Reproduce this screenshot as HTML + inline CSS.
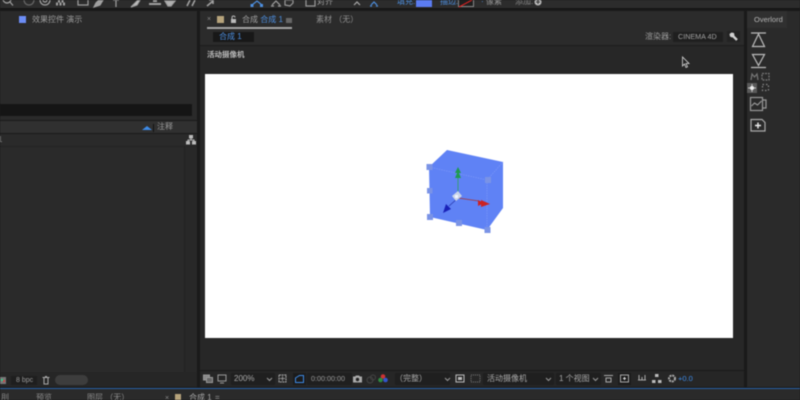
<!DOCTYPE html>
<html><head><meta charset="utf-8">
<style>
html,body{margin:0;padding:0;width:800px;height:400px;overflow:hidden;background:#1a1a1a}
body{font-family:"Liberation Sans","Noto Sans CJK SC",sans-serif;font-size:8px;color:#a8a8a8}
#w{position:absolute;left:0;top:0;width:800px;height:400px;overflow:hidden;filter:blur(.4px)}
.a{position:absolute}
.t{position:absolute;white-space:nowrap;line-height:10px}
svg{position:absolute;overflow:visible}
</style></head><body><div id="w">
<!-- panels -->
<div class="a" style="left:0;top:0;width:800px;height:8px;background:#2c2c2c"></div>
<div class="a" style="left:0;top:11px;width:197px;height:92px;background:#2a2a2a"></div>
<div class="a" style="left:0;top:104px;width:192px;height:12px;background:#151515;border-radius:0 2px 2px 0"></div>
<div class="a" style="left:0;top:103px;width:197px;height:1px;background:#2a2a2a"></div>
<div class="a" style="left:192px;top:104px;width:5px;height:16px;background:#2a2a2a"></div>
<div class="a" style="left:0;top:116px;width:197px;height:4px;background:#2a2a2a"></div>
<div class="a" style="left:0;top:121px;width:197px;height:12px;background:#303030"></div>
<div class="a" style="left:0;top:134px;width:197px;height:238px;background:#2a2a2a"></div>
<div class="a" style="left:185px;top:146px;width:12px;height:226px;background:#282828"></div>
<div class="a" style="left:0;top:146px;width:197px;height:1px;background:#232323"></div>
<div class="a" style="left:184px;top:146px;width:1px;height:226px;background:#222"></div>
<div class="a" style="left:0;top:372px;width:197px;height:15px;background:#262626"></div>
<div class="a" style="left:200px;top:11px;width:544px;height:34px;background:#2b2b2b"></div>
<div class="a" style="left:200px;top:46px;width:544px;height:324px;background:#272727"></div>
<div class="a" style="left:200px;top:371px;width:544px;height:16px;background:#262626"></div>
<div class="a" style="left:747px;top:11px;width:53px;height:376px;background:#2a2a2a"></div>
<div class="a" style="left:747px;top:11px;width:40px;height:17px;background:#303030"></div>
<div class="a" style="left:0;top:388px;width:800px;height:1px;background:#2a62a8"></div>
<div class="a" style="left:0;top:389px;width:800px;height:11px;background:#2a2a2a"></div>
<!-- white comp -->
<div class="a" style="left:205px;top:74px;width:528px;height:264px;background:#fff"></div>
<!-- top toolbar icons -->
<svg style="left:0;top:0" width="560" height="9" fill="none" stroke="#a0a0a0" stroke-width="1.2">
<circle cx="7" cy="-1" r="4"/><path d="M10 2l3 3.500"/>
<circle cx="29" cy="0" r="5" stroke="#666"/><circle cx="45" cy="0" r="5"/><circle cx="45" cy="0" r="2"/>
<path d="M56 4h10M58 1h6" stroke-width="3" stroke-dasharray="2 1.500"/>
<rect x="78" y="-4" width="10" height="9"/>
<path d="M94 7l2-4 4-4 3 1-3 5z" fill="#a0a0a0"/>
<path d="M113 0h6M116 0v7"/>
<path d="M131 7l3-3 4-4h2l-3 5z" fill="#c4c4c4"/>
<path d="M149 4h12" stroke-width="2"/><path d="M153 1h4" stroke-width="2"/>
<path d="M165 1h10l-4 5h-3z" fill="#b0b0b0"/>
<path d="M187 6l3-6M192 6l3-6" stroke-width="1.600"/>
<path d="M207 6l6-5M209 0h4v4" stroke-width="1.600"/>
<path d="M252 5l5-4 5 4" stroke="#4d8fe0"/><rect x="250.500" y="4" width="3" height="3" fill="#4d8fe0" stroke="none"/><rect x="260" y="4" width="3" height="3" fill="#4d8fe0" stroke="none"/>
<path d="M272 5l4-4 4 4M271 6h3M278 6h3"/>
<path d="M285 0h8v3l-3 3-5-1z" stroke="#999"/>
<rect x="306" y="-2" width="9" height="8" stroke="#999"/>
<path d="M354 5l3-3 3 3" stroke="#aaa"/>
<path d="M371 5l3-3 3 3M370 6h2M376 6h2" stroke="#4d8fe0"/>
</svg>
<div class="a" style="left:0;top:8px;width:800px;height:1px;background:#161616"></div>
<div class="t" style="left:317px;top:-3px;color:#a0a0a0">对齐</div>
<div class="t" style="left:397px;top:-3px;color:#4d8fe0">填充:</div>
<div class="a" style="left:416px;top:0;width:16px;height:7px;background:#5b7cf2"></div>
<div class="t" style="left:440px;top:-3px;color:#4d8fe0">描边:</div>
<div class="a" style="left:458px;top:0;width:14px;height:6px;background:#1e1e1e;border:1px solid #888;border-top:0"></div>
<svg style="left:458px;top:0" width="16" height="8"><path d="M1 7L14 0" stroke="#d22" stroke-width="1"/></svg>
<div class="t" style="left:481px;top:-3px;color:#9a9a9a"><span style="color:#4d8fe0">·</span> 像素</div>
<div class="t" style="left:515px;top:-3px;color:#888">添加:</div>
<svg style="left:534px;top:0" width="8" height="7"><circle cx="4" cy="2" r="3.500" fill="#bbb"/><path d="M2 2h4M4 0v4" stroke="#333"/></svg>
<!-- left panel -->
<div class="a" style="left:19px;top:16px;width:7px;height:7px;background:#6c8df5"></div>
<div class="t" style="left:32px;top:15px;color:#9c9c9c">效果控件 演示</div>
<svg style="left:142px;top:125px" width="10" height="5"><path d="M0 5L5 1l5 4z" fill="#3d8ae6"/></svg>
<div class="a" style="left:153px;top:124px;width:1px;height:8px;background:#111"></div>
<div class="t" style="left:157px;top:122px;font-size:8px;color:#989898">注释</div>
<div class="t" style="left:-2px;top:135px;color:#888">1</div>
<svg style="left:186px;top:135px" width="10" height="10" fill="#bbb"><rect x="3" y="0" width="4" height="3.500"/><rect x="0" y="6" width="4" height="3.500"/><rect x="6" y="6" width="4" height="3.500"/><path d="M5 3v2M2 6V5h6v1" stroke="#bbb" fill="none"/></svg>
<!-- bottom of left -->
<svg style="left:0;top:376px" width="8" height="9"><rect x="0" y="1" width="6" height="7" fill="#777"/><rect x="1" y="3" width="2" height="2" fill="#3c8"/><rect x="3" y="4" width="2" height="2" fill="#c44"/></svg>
<div class="a" style="left:11px;top:376px;width:26px;height:9px;background:#1e1e1e"></div>
<div class="t" style="left:16px;top:376px;font-size:7px;color:#999">8 bpc</div>
<svg style="left:42px;top:376px" width="8" height="9" fill="none" stroke="#aaa"><path d="M0.500 1.500h7M2 2v6h4V2M3 0.500h2"/></svg>
<div class="a" style="left:55px;top:375px;width:33px;height:10px;background:#3d3d3d;border-radius:5px"></div>
<!-- comp tabs -->
<div class="t" style="left:207px;top:15px;color:#888;font-size:7px">×</div>
<div class="a" style="left:217px;top:16px;width:7px;height:7px;background:#b7a47c"></div>
<svg style="left:230px;top:16px" width="7" height="7"><rect x="1" y="3" width="5" height="4" fill="#bbb"/><path d="M2 3V1.500a1.500 1.500 0 0 1 3 0" fill="none" stroke="#bbb"/></svg>
<div class="t" style="left:242px;top:15px;color:#a0a0a0">合成 <span style="color:#4d8fe0">合成 1</span></div>
<div class="a" style="left:286px;top:18px;width:6px;height:5px;background:#666"></div>
<div class="a" style="left:207px;top:27px;width:85px;height:2px;background:#a4a4a4"></div>
<div class="t" style="left:316px;top:15px;color:#8e8e8e">素材 （无）</div>
<div class="a" style="left:213px;top:32px;width:41px;height:10px;background:#181818"></div>
<div class="t" style="left:219px;top:32px;color:#4d8fe0">合成 1</div>
<div class="a" style="left:200px;top:45px;width:544px;height:1px;background:#1c1c1c"></div>
<div class="t" style="left:207px;top:50px;font-size:7.500px;font-weight:bold;color:#bcbcbc">活动摄像机</div>
<div class="t" style="left:645px;top:32px;color:#999">渲染器:</div>
<div class="a" style="left:673px;top:32px;width:50px;height:10px;background:#1f1f1f"></div>
<div class="t" style="left:678px;top:32px;font-size:7.200px;color:#a0a0a0">CINEMA 4D</div>
<div class="a" style="left:727px;top:31px;width:13px;height:11px;background:#232323"></div>
<svg style="left:729px;top:32px" width="10" height="10" fill="none"><path d="M3 3l5 5" stroke="#d0d0d0" stroke-width="2.400"/><path d="M5 1L2.500 .5 .5 2 1 4.500 3 5.500 5.500 3.500z" fill="#d0d0d0"/></svg>
<!-- cursor -->
<svg style="left:681px;top:56px" width="9" height="13"><path d="M1.500 1v9l2-2 1.500 3.500 1.500-.7L5 7.500h3z" fill="#222" stroke="#ddd" stroke-width=".8"/></svg>
<!-- overlord -->
<div class="t" style="left:754px;top:15px;font-size:7.500px;color:#b4b4b4">Overlord</div>
<svg style="left:748px;top:30px" width="24" height="112" fill="none" stroke="#bcbcbc" stroke-width="1.200">
<path d="M3 3h15M10.500 4L4.500 16.500h12z"/>
<path d="M3 37.500h15M4.500 24.500h12L10.500 35.500z"/>
<path d="M3 50l1-6 2.500 3 2.500-3 1 6" stroke="#777"/>
<rect x="14" y="43.500" width="7" height="6.500" stroke="#777" stroke-dasharray="2 1"/>
<rect x="-1" y="53" width="10" height="10" fill="#5a5a5a" stroke="none"/>
<circle cx="4" cy="58" r="2" fill="#eee" stroke="none"/><path d="M4 54v8M0 58h8" stroke="#eee" stroke-width=".7"/>
<rect x="14.500" y="54.500" width="6" height="6" stroke="#888" stroke-dasharray="1.500 2"/>
<rect x="2.500" y="67.500" width="12" height="13" stroke="#999"/><path d="M15 70h3v8h-3M3.500 76l3-3 3 2 4-4" stroke="#999"/>
<path d="M3 89.500h11l3 3v8.500H3z" stroke="#aaa"/><path d="M10 92.500v6M7 95.500h6" stroke="#eee" stroke-width="1.400"/>
</svg>
<!-- box -->
<svg style="left:415px;top:140px" width="100" height="100">
<path d="M14 27L32 10 88 22 88 68 72 90 15 77z" fill="#5f82f5"/>
<path d="M14 27L72 40 88 22M72 40V90" fill="none" stroke="#7a96f7" stroke-width=".8" stroke-dasharray="1.500 1"/>
<g fill="#7a93e6"><rect x="11.500" y="24" width="6" height="6"/><rect x="12" y="48" width="5.500" height="5.500"/><rect x="12" y="74" width="6" height="6"/><rect x="41" y="80" width="6" height="6"/><rect x="69.500" y="87" width="6" height="6"/><rect x="70" y="37" width="6" height="6"/></g>
<path d="M43 58V34" stroke="#2fa25a" stroke-width=".8"/>
<path d="M43 27l-3 6h6z" fill="#1f9a50"/><path d="M43 31l-3 7h6z" fill="#1f9a50"/>
<path d="M43 58L64 61" stroke="#a33" stroke-width=".8"/>
<path d="M75 64l-9-4v7z" fill="#c22"/><path d="M69 63l-6-3v6z" fill="#c22"/>
<path d="M43 58L34 66" stroke="#2a3ab0" stroke-width=".8"/>
<path d="M28 73l3-9 5 5z" fill="#1a22b8"/>
<path d="M37 56l6-5 4 5-6 5z" fill="#c9d4e8"/><rect x="40" y="55" width="3" height="3" fill="#f0f4ff"/>
</svg>
<!-- viewer footer -->
<svg style="left:203px;top:374px" width="26" height="10" fill="none" stroke="#999"><rect x="0.500" y="1" width="6" height="5" fill="#888"/><rect x="3.500" y="3.500" width="6" height="5" fill="#666"/><rect x="15" y="1" width="8" height="6"/><path d="M17 9h4"/></svg>
<div class="a" style="left:231px;top:373px;width:44px;height:12px;background:#1f1f1f"></div>
<div class="t" style="left:234px;top:374px;font-size:8px;color:#a8a8a8">200%</div>
<svg style="left:266px;top:377px" width="7" height="5"><path d="M1 1l2.500 2.500L6 1" fill="none" stroke="#999"/></svg>
<svg style="left:278px;top:373px" width="28" height="12" fill="none"><rect x="1" y="2" width="7" height="7" stroke="#aaa" stroke-dasharray="2 .6"/><path d="M4.500 3v5M2 5.500h5" stroke="#aaa" stroke-width=".7"/><rect x="15" y="0" width="13" height="12" fill="#1b1b1b"/><path d="M17.500 9.500V5l4-2.500h4v7z" stroke="#3d8ae6"/></svg>
<div class="a" style="left:307px;top:373px;width:45px;height:12px;background:#1f1f1f"></div>
<div class="t" style="left:311px;top:374px;font-size:7.200px;color:#999">0:00:00:00</div>
<svg style="left:353px;top:374px" width="44" height="11" fill="none"><path d="M0 2.500h2l1-1h3l1 1h2v6H0z" fill="#aaa"/><circle cx="4.500" cy="5.500" r="1.700" fill="#222"/><circle cx="17" cy="6" r="3" stroke="#444"/><circle cx="20" cy="3.500" r="2.500" stroke="#444"/><circle cx="30" cy="2.500" r="2.300" fill="#c33"/><circle cx="27.500" cy="6" r="2.300" fill="#2d8a3f"/><circle cx="32.500" cy="6" r="2.300" fill="#3355cc"/></svg>
<div class="a" style="left:395px;top:373px;width:55px;height:12px;background:#1f1f1f"></div>
<div class="t" style="left:395px;top:374px;color:#a8a8a8">（完整）</div>
<svg style="left:444px;top:377px" width="7" height="5"><path d="M1 1l2.500 2.500L6 1" fill="none" stroke="#999"/></svg>
<svg style="left:455px;top:374px" width="26" height="10" fill="none"><rect x="1" y="1" width="8" height="7" stroke="#bbb"/><rect x="3" y="3" width="4" height="3" fill="#bbb"/><rect x="16" y="1" width="9" height="7" stroke="#777" stroke-dasharray="1 1"/></svg>
<div class="a" style="left:483px;top:373px;width:71px;height:12px;background:#1f1f1f"></div>
<div class="t" style="left:487px;top:374px;color:#a8a8a8">活动摄像机</div>
<svg style="left:545px;top:377px" width="7" height="5"><path d="M1 1l2.500 2.500L6 1" fill="none" stroke="#999"/></svg>
<div class="a" style="left:556px;top:373px;width:45px;height:12px;background:#1f1f1f"></div>
<div class="t" style="left:559px;top:374px;color:#a8a8a8">1 个视图</div>
<svg style="left:592px;top:377px" width="7" height="5"><path d="M1 1l2.500 2.500L6 1" fill="none" stroke="#999"/></svg>
<svg style="left:604px;top:373px" width="72" height="12" fill="none" stroke="#aaa"><path d="M0 2.500h9M2 5h5v4H2z"/><rect x="14" y="0" width="13" height="12" fill="#1b1b1b" stroke="none"/><rect x="16.500" y="2" width="8" height="7"/><path d="M20.500 4v3M19 5.500h3" stroke="#ddd"/><path d="M34 7h8M35 2v5M41 2v5M38 4v3"/><rect x="51" y="1" width="3.500" height="3" fill="#bbb" stroke="none"/><rect x="48" y="7" width="3.500" height="3" fill="#bbb" stroke="none"/><rect x="54" y="7" width="3.500" height="3" fill="#bbb" stroke="none"/><circle cx="68" cy="5.500" r="3" stroke-width="2" stroke-dasharray="2 .8"/></svg>
<div class="t" style="left:678px;top:374px;font-size:7.500px;color:#3d8ae6">+0.0</div>
<!-- bottom tabs -->
<div class="t" style="left:1px;top:393px;color:#8a8a8a">刖</div>
<div class="t" style="left:36px;top:393px;color:#8a8a8a">预览</div>
<div class="t" style="left:87px;top:393px;color:#8a8a8a">图层 （无）</div>
<div class="t" style="left:165px;top:394px;font-size:7px;color:#888">×</div>
<div class="a" style="left:175px;top:394px;width:6px;height:6px;background:#b7a47c"></div>
<div class="t" style="left:189px;top:393px;color:#a8a8a8">合成 1</div>
<div class="t" style="left:215px;top:393px;color:#999">=</div>
</div></body></html>
